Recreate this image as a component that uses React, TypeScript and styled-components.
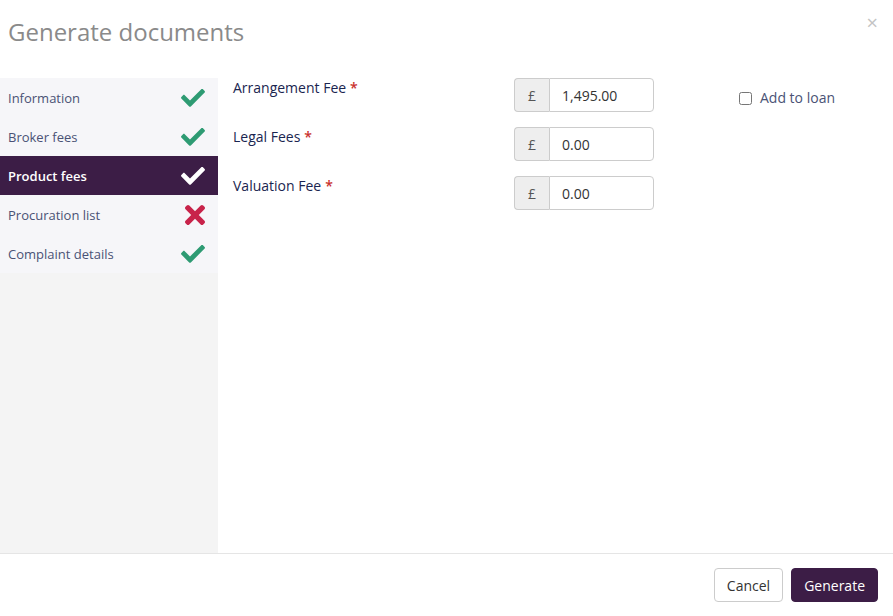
import styled, { createGlobalStyle } from "styled-components";

type Status = "done" | "error";

type Step = {
    name: string;
    status: Status;
};

const steps: Step[] = [
    { name: "Information", status: "done" },
    { name: "Broker fees", status: "done" },
    { name: "Product fees", status: "done" },
    { name: "Procuration list", status: "error" },
    { name: "Complaint details", status: "done" },
];

const fees = [
    { label: "Arrangement Fee", value: "1,495.00", addToLoan: true },
    { label: "Legal Fees", value: "0.00", addToLoan: false },
    { label: "Valuation Fee", value: "0.00", addToLoan: false },
];

const ACTIVE = 2;

const CheckIcon = ({ color }: { color: string }) => (
    <svg width="24" height="18" viewBox="0 68 512 384" fill={color}>
        <path d="M173.898 439.404l-166.4-166.4c-9.997-9.997-9.997-26.206 0-36.204l36.203-36.204c9.997-9.998 26.207-9.998 36.204 0L192 312.69 432.095 72.596c9.997-9.997 26.207-9.997 36.204 0l36.203 36.204c9.997 9.997 9.997 26.206 0 36.204l-294.4 294.401c-9.998 9.997-26.207 9.997-36.204-.001z" />
    </svg>
);

const TimesIcon = () => (
    <svg width="20" height="20" viewBox="0 80 352 352" fill="#c8234a">
        <path d="M242.72 256l100.07-100.07c12.28-12.28 12.28-32.19 0-44.48l-22.24-22.24c-12.28-12.28-32.19-12.28-44.48 0L176 189.28 75.930 89.21c-12.28-12.28-32.19-12.28-44.48 0L9.21 111.45c-12.28 12.28-12.280 32.19 0 44.48L109.28 256 9.21 356.07c-12.28 12.28-12.28 32.19 0 44.48l22.24 22.24c12.28 12.28 32.2 12.28 44.48 0L176 322.72l100.07 100.07c12.28 12.28 32.2 12.28 44.48 0l22.24-22.24c12.28-12.28 12.28-32.19 0-44.48L242.72 256z" />
    </svg>
);

const App = () => {
    return (
        <>
            <GlobalStyle />
            <StyledModal>
                <StyledHeader>
                    <StyledTitle>Generate documents</StyledTitle>
                    <StyledClose>×</StyledClose>
                </StyledHeader>
                <StyledBody>
                    <StyledSidebar>
                        <StyledNavUl>
                            {steps.map((step, key) => (
                                <StyledNavLi key={key} active={key === ACTIVE}>
                                    <span>{step.name}</span>
                                    {step.status === "done" ? (
                                        <CheckIcon
                                            color={
                                                key === ACTIVE
                                                    ? "#ffffff"
                                                    : "#2e9b73"
                                            }
                                        />
                                    ) : (
                                        <TimesIcon />
                                    )}
                                </StyledNavLi>
                            ))}
                        </StyledNavUl>
                    </StyledSidebar>
                    <StyledContent>
                        {fees.map((fee, key) => (
                            <StyledFeeRow key={key}>
                                <StyledLabel>
                                    {fee.label}
                                    <StyledRequired>*</StyledRequired>
                                </StyledLabel>
                                <StyledInputGroup>
                                    <StyledAddon>£</StyledAddon>
                                    <StyledInput defaultValue={fee.value} />
                                </StyledInputGroup>
                                {fee.addToLoan && (
                                    <StyledCheckLabel>
                                        <input type="checkbox" />
                                        Add to loan
                                    </StyledCheckLabel>
                                )}
                            </StyledFeeRow>
                        ))}
                    </StyledContent>
                </StyledBody>
                <StyledFooter>
                    <StyledButton>Cancel</StyledButton>
                    <StyledButton primary>Generate</StyledButton>
                </StyledFooter>
            </StyledModal>
        </>
    );
};
export default App;

const GlobalStyle = createGlobalStyle({
    "html, body": {
        margin: 0,
        padding: 0,
        background: "#ffffff",
    },
    body: {
        fontFamily: '"Open Sans", "Liberation Sans", sans-serif',
        color: "#333333",
    },
    "*": {
        boxSizing: "border-box",
    },
});

const StyledModal = styled.div({
    display: "flex",
    flexDirection: "column",
    width: 893,
    height: 616,
    background: "#ffffff",
});

const StyledHeader = styled.header({
    display: "flex",
    justifyContent: "space-between",
    alignItems: "flex-start",
    height: 78,
    padding: "0 15px 0 8px",
});

const StyledTitle = styled.h4({
    margin: 0,
    paddingTop: 15,
    fontSize: 24,
    fontWeight: 400,
    lineHeight: "34px",
    color: "#8a8a8a",
});

const StyledClose = styled.span({
    paddingTop: 10,
    fontSize: 20,
    lineHeight: "26px",
    color: "#c4c4c4",
});

const StyledBody = styled.div({
    display: "flex",
    flex: 1,
    borderBottom: "1px solid #e5e5e5",
});

const StyledSidebar = styled.aside({
    width: 218,
    background: "#f4f4f4",
});

const StyledNavUl = styled.ul({
    listStyle: "none",
    margin: 0,
    padding: 0,
    background: "#f6f6f9",
});

const StyledNavLi = styled.li<{ active: boolean }>(({ active }) => ({
    display: "flex",
    justifyContent: "space-between",
    alignItems: "center",
    height: 39,
    padding: "0 13px 0 8px",
    fontSize: 13,
    fontWeight: active ? 600 : 400,
    color: active ? "#ffffff" : "#4a5275",
    background: active ? "#3c1d46" : "transparent",
}));

const StyledContent = styled.div({
    flex: 1,
    display: "flex",
    flexDirection: "column",
    gap: 15,
    padding: "0 15px",
});

const StyledFeeRow = styled.div({
    display: "flex",
    alignItems: "flex-start",
});

const StyledLabel = styled.label({
    width: 281,
    fontSize: 14,
    fontWeight: 500,
    lineHeight: "20px",
    color: "#1a2550",
});

const StyledRequired = styled.span({
    marginLeft: 4,
    fontWeight: 600,
    color: "#c9302c",
});

const StyledInputGroup = styled.div({
    display: "flex",
    width: 140,
    height: 34,
});

const StyledAddon = styled.span({
    display: "flex",
    alignItems: "center",
    justifyContent: "center",
    width: 35,
    fontSize: 14,
    color: "#555555",
    background: "#eeeeee",
    border: "1px solid #cccccc",
    borderRight: "none",
    borderRadius: "4px 0 0 4px",
});

const StyledInput = styled.input({
    flex: 1,
    minWidth: 0,
    padding: "0 12px",
    fontFamily: "inherit",
    fontSize: 14,
    color: "#333333",
    border: "1px solid #cccccc",
    borderRadius: "0 4px 4px 0",
    outline: "none",
});

const StyledCheckLabel = styled.label({
    display: "flex",
    alignItems: "center",
    gap: 8,
    marginLeft: 85,
    paddingTop: 10,
    fontSize: 14,
    lineHeight: "20px",
    color: "#4a5275",

    input: {
        width: 13,
        height: 13,
        margin: 0,
    },
});

const StyledFooter = styled.footer({
    display: "flex",
    justifyContent: "flex-end",
    alignItems: "flex-start",
    gap: 8,
    height: 62,
    padding: "14px 15px 0",
});

const StyledButton = styled.button<{ primary?: boolean }>(({ primary }) => ({
    height: 34,
    padding: "0 12px",
    fontFamily: "inherit",
    fontSize: 14,
    color: primary ? "#ffffff" : "#333333",
    background: primary ? "#3c1d46" : "#ffffff",
    border: `1px solid ${primary ? "#3c1d46" : "#cccccc"}`,
    borderRadius: 4,
}));
